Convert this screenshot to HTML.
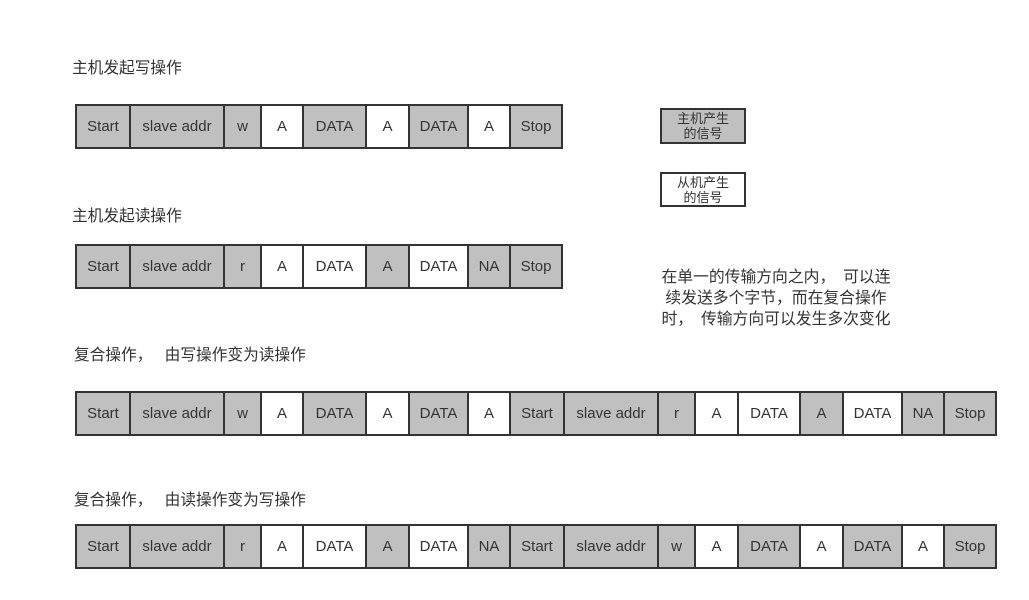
<!DOCTYPE html>
<html><head><meta charset="utf-8"><style>
body{margin:0;width:1029px;height:600px;background:#fff;position:relative;overflow:hidden;font-family:"Liberation Sans","Noto Sans CJK SC",sans-serif;color:#333}
.c{position:absolute;box-sizing:border-box;border:2px solid #333;display:flex;align-items:center;justify-content:center;font-size:15px;color:#333}
.g{background:#c0c0c0}.w{background:#fff}
.t{position:absolute;font-size:15.7px;white-space:nowrap;line-height:18px}
</style></head><body>
<div class="t" style="left:72px;top:60px">主机发起写操作</div>
<div class="t" style="left:72px;top:208px">主机发起读操作</div>
<div class="t" style="left:74px;top:347px">复合操作，　 由写操作变为读操作</div>
<div class="t" style="left:74px;top:492px">复合操作，　 由读操作变为写操作</div>
<div class="c g" style="left:660px;top:108px;width:86px;height:36px;font-size:13px;line-height:15px;text-align:center">主机产生<br>的信号</div>
<div class="c w" style="left:660px;top:172px;width:86px;height:35px;font-size:13px;line-height:15px;text-align:center">从机产生<br>的信号</div>
<div class="t" style="left:656px;top:267px;width:240px;text-align:center;line-height:21px;font-size:15.8px">在单一的传输方向之内，　可以连<br>续发送多个字节，而在复合操作<br>时，　传输方向可以发生多次变化</div>
<div id="rows"></div>
<script>
var b=[75,129,223,260,302,365,408,467,509,563,657,694,737,799,842,901,943,997];
var rows=[
[104,[["Start","g"],["slave addr","g"],["w","g"],["A","w"],["DATA","g"],["A","w"],["DATA","g"],["A","w"],["Stop","g"]]],
[244,[["Start","g"],["slave addr","g"],["r","g"],["A","w"],["DATA","w"],["A","g"],["DATA","w"],["NA","g"],["Stop","g"]]],
[391,[["Start","g"],["slave addr","g"],["w","g"],["A","w"],["DATA","g"],["A","w"],["DATA","g"],["A","w"],["Start","g"],["slave addr","g"],["r","g"],["A","w"],["DATA","w"],["A","g"],["DATA","w"],["NA","g"],["Stop","g"]]],
[524,[["Start","g"],["slave addr","g"],["r","g"],["A","w"],["DATA","w"],["A","g"],["DATA","w"],["NA","g"],["Start","g"],["slave addr","g"],["w","g"],["A","w"],["DATA","g"],["A","w"],["DATA","g"],["A","w"],["Stop","g"]]]];
var h="";
rows.forEach(function(r){var n=r[1].length;r[1].forEach(function(c,i){
var w=b[i+1]-b[i]+(i==n-1?0:2);
h+='<div class="c '+c[1]+'" style="left:'+b[i]+'px;top:'+r[0]+'px;width:'+w+'px;height:45px">'+c[0]+'</div>';});});
document.getElementById("rows").innerHTML=h;
</script>
</body></html>
